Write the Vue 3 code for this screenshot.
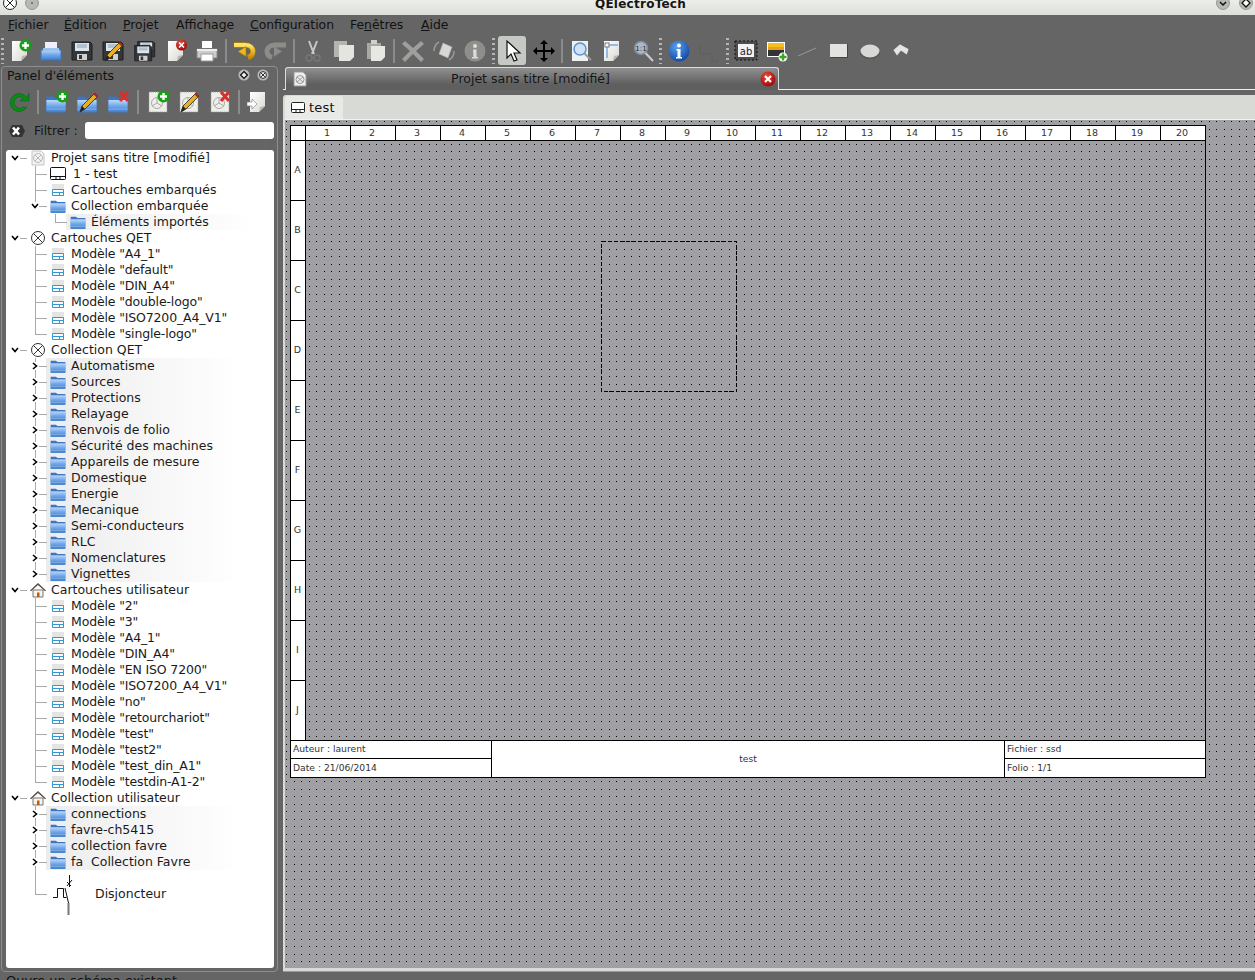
<template>
  <div class="app">
    <!-- shared icon shapes -->
    <svg class="defs" width="0" height="0">
      <defs>
        <linearGradient id="blue" x1="0" y1="0" x2="0" y2="1"><stop offset="0" stop-color="#bcd9f7" /><stop offset=".5" stop-color="#6ea6e8" /><stop offset="1" stop-color="#3f7fcf" /></linearGradient>
        <linearGradient id="paper" x1="0" y1="0" x2="1" y2="1"><stop offset="0" stop-color="#fff" /><stop offset="1" stop-color="#d8d8d2" /></linearGradient>
        <linearGradient id="gold" x1="0" y1="0" x2="0" y2="1"><stop offset="0" stop-color="#ffe46a" /><stop offset="1" stop-color="#c88a00" /></linearGradient>
        <radialGradient id="infob" cx=".4" cy=".3" r=".8"><stop offset="0" stop-color="#5aa0ee" /><stop offset="1" stop-color="#0a3f9c" /></radialGradient>
        <radialGradient id="redb" cx=".4" cy=".3" r=".8"><stop offset="0" stop-color="#e84a3a" /><stop offset="1" stop-color="#900" /></radialGradient>
        <symbol id="page" viewBox="0 0 24 24"><path d="M4 2h15v14l-6 6H4z" fill="url(#paper)" /><path d="M13 22l1-5 5-1z" fill="#b8b8b4" /></symbol>
        <symbol id="plus" viewBox="0 0 24 24"><circle cx="17.500" cy="6.500" r="6" fill="#15a015" /><path d="M17.500 3v7M14 6.500h7" stroke="#fff" stroke-width="2.400" /></symbol>
        <symbol id="redx" viewBox="0 0 24 24"><path d="M13 2l8 9M21 2l-8 9" stroke="#d8302c" stroke-width="3.200" /></symbol>
        <symbol id="pencil" viewBox="0 0 24 24"><path d="M4 22l2-6L19 3l3 3L9 19z" fill="#e8b020" stroke="#222" stroke-width=".8" /><path d="M17.500 4.500l3 3 1.500-1.500-3-3z" fill="#c02020" /><path d="M4 22l2-6 3 3z" fill="#222" /></symbol>
        <symbol id="folder" viewBox="0 0 24 24"><path d="M1 4h8l2 2h12v16H1z" fill="#3a76c4" /><path d="M1 8h22v14H1z" fill="url(#blue)" /><path d="M1 18h22v1H1z" fill="#fff" fill-opacity=".3" /></symbol>
        <symbol id="elem" viewBox="0 0 24 24"><path d="M3 2h15l3 3v17H3z" fill="#efefe9" stroke="#999" stroke-dasharray="1 1" /><circle cx="11" cy="13" r="5.500" fill="none" stroke="#aaa" /><path d="M11 7.500v5.500l5 3M11 13l-5 3" stroke="#aaa" fill="none" /></symbol>
        <symbol id="floppy" viewBox="0 0 24 24"><path d="M2 3h18l2 2v16H2z" fill="#33363a" stroke="#1c1c1c" /><path d="M5 4h14v8H5z" fill="#dce4ec" /><path d="M7 6h10M7 8h10" stroke="#8aa0b8" /><path d="M7 15h10v6H7z" fill="#d0d0d0" /><path d="M9 16h3v4H9z" fill="#333" /></symbol>
      </defs>
    </svg>

    <header class="titlebar">
      <span class="win-btn cross"><svg viewBox="0 0 14 14"><circle cx="7" cy="7" r="6.500" fill="#fff" stroke="#222" /><path d="M2.500 2.500l9 9M11.500 2.500l-9 9" stroke="#222" /></svg></span>
      <span class="win-btn pin"><svg viewBox="0 0 14 14"><circle cx="7" cy="7" r="6.500" fill="#b8b9b4" stroke="#999" /><circle cx="7" cy="7" r="1" fill="#666" /></svg></span>
      <span class="title">QElectroTech</span>
      <span class="win-btn mini"><svg viewBox="0 0 14 14"><circle cx="7" cy="7" r="6.500" fill="#b8b9b4" stroke="#999" /><path d="M4 6l3 3 3-3" fill="none" stroke="#111" stroke-width="1.500" /></svg></span>
      <span class="win-btn maxi"><svg viewBox="0 0 14 14"><circle cx="7" cy="7" r="6.500" fill="#b8b9b4" stroke="#999" /><path d="M7 3l4 4-4 4-4-4z" fill="#fff" stroke="#111" stroke-width="1.300" /></svg></span>
    </header>

    <nav class="menubar">
      <span style="width:56px"><u>F</u>ichier</span>
      <span style="width:59px"><u>É</u>dition</span>
      <span style="width:53px"><u>P</u>rojet</span>
      <span style="width:74px">Afficha<u>g</u>e</span>
      <span style="width:100px"><u>C</u>onfiguration</span>
      <span style="width:71px">Fe<u>n</u>êtres</span>
      <span><u>A</u>ide</span>
    </nav>

    <div class="toolbar">
      <span class="grip first"></span>
      <template v-for="(t, i) in mainTools" :key="i">
        <span v-if="t === '|'" class="sep"></span>
        <span v-else-if="t === ':'" class="grip"></span>
        <span v-else-if="t === ';'" class="grip thin"></span>
        <span v-else class="tool" :class="{ on: t === 'select', last: i > 21 }">
          <svg width="24" height="24" viewBox="0 0 24 24" v-html="icons[t]"></svg>
        </span>
      </template>
    </div>

    <main class="body">
      <aside class="dock">
        <div class="dock-head">
          <span>Panel d'éléments</span>
          <span class="dock-btns">
            <svg width="12" height="12" viewBox="0 0 14 14"><circle cx="7" cy="7" r="6.500" fill="#bbb" /><path d="M7 3l4 4-4 4-4-4z" fill="#eee" stroke="#111" stroke-width="1.500" /></svg>
            <svg width="12" height="12" viewBox="0 0 14 14"><circle cx="7" cy="7" r="6.500" fill="#bbb" /><circle cx="7" cy="7" r="4" fill="#eee" stroke="#111" /><path d="M4.500 4.500l5 5M9.500 4.500l-5 5" stroke="#111" /></svg>
          </span>
        </div>
        <div class="dock-tools">
          <template v-for="(t, i) in dockTools" :key="i">
            <span v-if="t === '|'" class="sep"></span>
            <span v-else class="tool small"><svg width="24" height="24" viewBox="0 0 24 24" v-html="icons[t]"></svg></span>
          </template>
        </div>
        <div class="filter">
          <svg width="18" height="14" viewBox="0 0 18 14"><path d="M4 1h10l3 6-3 6H4L1 7z" fill="#333" /><path d="M5 3.500l6 7M11 3.500l-6 7" stroke="#fff" stroke-width="2.600" /></svg>
          <label>Filtrer :</label>
          <span class="filter-input"></span>
        </div>
        <div class="tree">
          <div v-for="(r, i) in rows" :key="i" class="row" :class="['d' + r.d, 'i-' + r.icon, { last: r.last, shade: r.shade, model: r.model }]">
            <svg v-if="r.arrow" class="arrow" width="8" height="8" viewBox="0 0 8 8">
              <path :d="r.arrow === 'open' ? 'M1 2l3 3.500L7 2' : 'M2 1l3.500 3L2 7'" fill="none" stroke="#000" stroke-width="1.600" />
            </svg>
            <svg v-if="r.icon === 'breaker'" class="breaker" width="24" height="48" viewBox="0 0 24 48">
              <path d="M19.500 5v12M17 16l5-6M17 12l4 4M15 18l3.500 15M3 27.500h4.500v-9h6v9h3" fill="none" stroke="#111" />
              <path d="M18.500 33v12" stroke="#777" stroke-width="2" />
            </svg>
            <svg v-else class="ticon" width="16" height="16" viewBox="0 0 16 16" v-html="treeIcons[r.icon]"></svg>
            <span>{{ r.label }}</span>
          </div>
        </div>
      </aside>

      <section class="workspace">
        <div class="tabstrip">
          <div class="tab">
            <svg width="14" height="16" viewBox="0 0 14 16"><path d="M1 1h9l3 3v11H1z" fill="#eee" stroke="#999" /><circle cx="7" cy="8.500" r="4" fill="none" stroke="#999" /><path d="M4 6l6 5M10 6l-6 5" stroke="#999" /></svg>
            <span class="tab-title">Projet sans titre [modifié]</span>
            <svg width="16" height="16" viewBox="0 0 16 16"><circle cx="8" cy="8" r="7.500" fill="url(#redb)" /><path d="M5 5l6 6M11 5l-6 6" stroke="#fff" stroke-width="2.200" /></svg>
          </div>
        </div>
        <div class="subwin">
          <div class="subtabs">
            <div class="subtab">
              <svg width="16" height="14" viewBox="0 0 16 14"><rect x="1.500" y="1.500" width="13" height="10" rx="1" fill="#fff" stroke="#222" /><path d="M1.500 8.500h13M6 8.500v3M10 8.500v3" stroke="#222" /></svg>
              <span>test</span>
            </div>
          </div>
          <div class="canvas">
            <div class="sheet">
              <div class="ruler">
                <span class="corner"></span>
                <span v-for="n in 20" :key="n" class="col">{{ n }}</span>
              </div>
              <div class="rows">
                <span v-for="l in 'ABCDEFGHIJ'" :key="l" class="rowhead">{{ l }}</span>
              </div>
              <div class="cartouche">
                <div class="cell-stack">
                  <span>Auteur : laurent</span>
                  <span>Date : 21/06/2014</span>
                </div>
                <div class="cart-title">test</div>
                <div class="cell-stack">
                  <span>Fichier : ssd</span>
                  <span>Folio : 1/1</span>
                </div>
              </div>
            </div>
            <svg class="selection" width="137" height="152"><rect x=".5" y=".5" width="135" height="150" fill="none" stroke="#000" stroke-dasharray="4 2" shape-rendering="crispEdges" /></svg>
          </div>
        </div>
      </section>
    </main>

    <footer class="status">Ouvre un schéma existant</footer>
  </div>
</template>

<script setup>
const mainTools = [
  'new', 'open', 'save', 'saveas', 'saveall', 'close', 'print', '|',
  'undo', 'redo', '|',
  'cut', 'copy', 'paste', '|',
  'del', 'rotate', 'infog', ':',
  'select', 'move', '|',
  'fit', 'layout', 'zoom', ';',
  'info', 'wire', ';',
  'text', 'image', 'line', 'rect', 'ellipse', 'back'
]
const dockTools = ['reload', '|', 'fnew', 'fedit', 'fdel', '|', 'enew', 'eedit', 'edel', '|', 'import']

const use = (id, extra = 'width="24" height="24"') => `<use href="#${id}" ${extra}/>`
const lowFolder = use('folder', 'x="0" y="3" width="22" height="21"')
const icons = {
  new: use('page') + use('plus'),
  open: '<path d="M6 3h12v9H6z" fill="#eef"/><path d="M2 11h20v10H2z" fill="url(#blue)" stroke="#3a76c4"/><path d="M4 9h16v3H4z" fill="#9cc3ee"/>',
  save: use('floppy'),
  saveas: use('floppy') + use('pencil'),
  saveall: '<g transform="translate(3 0) scale(.85)">' + use('floppy') + '</g><g transform="translate(0 4) scale(.85)">' + use('floppy') + '</g>',
  close: use('page') + '<circle cx="17.500" cy="6" r="5.500" fill="url(#redb)"/><path d="M15 3.500l5 5M20 3.500l-5 5" stroke="#fff" stroke-width="1.600"/>',
  print: '<path d="M7 2h10v7H7z" fill="#fff"/><path d="M2 10h20v9H2z" fill="#ccc" stroke="#888"/><path d="M6 15h12v7H6z" fill="#fff" stroke="#999"/><path d="M2 10h20v2H2z" fill="#eee"/>',
  undo: '<path d="M2 6h11c5 0 8 3 8 6.500 0 3-2 5-5 6" fill="none" stroke="#b88400" stroke-width="5.400"/><path d="M2 6h11c5 0 8 3 8 6.500 0 3-2 5-5 6" fill="none" stroke="url(#gold)" stroke-width="4.200"/><path d="M6 12.500l8-5v10z" fill="#e8b820" stroke="#a87400" stroke-width=".6"/>',
  redo: '<path d="M22 6H11C6 6 3 9 3 12.500c0 3 2 5 5 6" fill="none" stroke="#8a8d88" stroke-width="5"/><path d="M18 12.500l-8-5v10z" fill="#8a8d88"/>',
  cut: '<path d="M8 2l5 13M16 2l-5 13" stroke="#c8c8c4" stroke-width="2"/><circle cx="8" cy="19" r="3" fill="none" stroke="#777" stroke-width="1.500"/><circle cx="16" cy="19" r="3" fill="none" stroke="#777" stroke-width="1.500"/>',
  copy: '<path d="M2 2h13v16H2z" fill="#b4b5b0"/><path d="M7 6h15v12l-4 4H7z" fill="#e4e5df"/>',
  paste: '<path d="M4 4h14v16H4z" fill="#a8a9a4"/><path d="M8 1h6v4H8z" fill="#d0d0cc"/><path d="M8 7h14v11l-4 4H8z" fill="#e8e8e2"/>',
  del: '<path d="M4 2l8 7 8-7 3 3-8 7 8 8-3 3-8-8-8 8-3-3 8-8-8-7z" fill="#9ea09c"/>',
  rotate: '<path d="M11 4l9 4-4 11-9-4z" fill="#d8d9d4" stroke="#aaa" stroke-width=".6"/><path d="M2 12q0-6 5-9M22 12q0 6-5 9" fill="none" stroke="#9a9a96" stroke-width="1.500"/>',
  infog: '<circle cx="12" cy="12" r="10.500" fill="#8e8f8b"/><circle cx="12" cy="7" r="2" fill="#ddd"/><path d="M10 10.500h3.500V18H15v1.500H9V18h1.500z" fill="#ddd"/>',
  select: '<path d="M7 2v17l4-4 3 7 3-1-3-7h6z" fill="#fff" stroke="#111" stroke-width="1.200"/>',
  move: '<path d="M12 1l4 4h-3v6h6V8l4 4-4 4v-3h-6v6h3l-4 4-4-4h3v-6H5v3l-4-4 4-4v3h6V5H8z" fill="#000"/>',
  fit: '<path d="M3 2h16v20H3z" fill="#eef0f2"/><circle cx="11" cy="10" r="6" fill="#cfe2f6" stroke="#5a93d6" stroke-width="1.500"/><path d="M15 14l7 7" stroke="#999" stroke-width="2"/>',
  layout: use('page') + '<path d="M7 6h11M7 6v13" stroke="#3a86e8"/><rect x="5" y="4" width="4" height="4" fill="#fff" stroke="#777"/>',
  zoom: '<circle cx="10" cy="9" r="6.500" fill="#aab8c8" stroke="#7d8b9c" stroke-width="1.500"/><text x="10" y="12" font-size="7" text-anchor="middle" fill="#222" font-family="DejaVu Sans">1:1</text><path d="M14.500 14l7.500 8" stroke="#ccc" stroke-width="2"/>',
  info: '<circle cx="12" cy="12" r="10.500" fill="url(#infob)"/><circle cx="12" cy="6.500" r="2" fill="#fff"/><path d="M9.500 10h4v8h1.500v1.500H9V18h1.500v-6.500h-1z" fill="#fff"/>',
  wire: '<path d="M2 6v9h12v7h7" fill="none" stroke="#5e605c"/>',
  text: '<rect x="1" y="2" width="22" height="19" fill="#222" fill-opacity=".35" stroke="#111" stroke-dasharray="2 2"/><rect x="4" y="5" width="16" height="13" fill="#f2f2f6"/><text x="12" y="15.500" font-size="10" text-anchor="middle" fill="#223" font-family="DejaVu Sans">ab</text>',
  image: '<rect x="2" y="3" width="18" height="15" fill="#fff"/><rect x="3" y="4" width="16" height="13" fill="#e8a020"/><rect x="3" y="4" width="16" height="4" fill="#f4c020"/><path d="M3 11h16v6H3z" fill="#333"/><circle cx="18" cy="18" r="4.500" fill="#fff"/><path d="M18 14.500v7M14.500 18h7" stroke="#3aa820" stroke-width="2.400"/>',
  line: '<path d="M2 17l18-8" stroke="#999"/>',
  rect: '<rect x="3" y="5" width="18" height="14" fill="#444"/><rect x="3" y="5" width="17" height="13" fill="#e2e3e0"/>',
  ellipse: '<ellipse cx="12" cy="13" rx="10" ry="7" fill="#555"/><ellipse cx="12" cy="12" rx="9.500" ry="6.500" fill="#d8d8d6"/>',
  back: '<path d="M4 11l7-6 9 5-2 6-6-4-4 5z" fill="#e4e4e2" stroke="#555" stroke-width=".6"/>',
  reload: '<path d="M20 8a9 9 0 1 0 0 9h-4a5.500 5.500 0 1 1 0-9l-3 3h9V3z" fill="#0f8a0f" stroke="#063" stroke-width=".6"/>',
  fnew: lowFolder + use('plus'),
  fedit: lowFolder + use('pencil'),
  fdel: lowFolder + use('redx'),
  enew: use('elem') + use('plus'),
  eedit: use('elem') + use('pencil'),
  edel: use('elem') + use('redx'),
  import: use('page') + '<path d="M1 12h5V9l5 5-5 5v-3H1z" fill="#fff" stroke="#777" stroke-width=".6"/>'
}

const treeIcons = {
  project: '<path d="M2 1h9l3 3v11H2z" fill="#f2f2f2" stroke="#c4c4c4"/><circle cx="8" cy="8" r="4.500" fill="none" stroke="#bbb"/><path d="M5 5l6 6M11 5l-6 6" stroke="#bbb"/>',
  diagram: '<rect x=".5" y="1.500" width="15" height="12" rx="1" fill="#fff" stroke="#111"/><path d="M1 10.500h14M6 10.500v3M10 10.500v3" stroke="#111"/>',
  block: '<path d="M2 2h12v12H2z" fill="#e4e4e4"/><path d="M2.500 7.500h11v6h-11zM2.500 10.500h11M9.500 10.500v3" fill="#fff" stroke="#2f9ad0"/>',
  folder: '<use href="#folder" width="16" height="16"/>',
  qet: '<circle cx="8" cy="8" r="6.500" fill="#fff" stroke="#333"/><path d="M3.500 3.500l9 9M12.500 3.500l-9 9" stroke="#333"/>',
  home: '<path d="M3 8h10v7H3z" fill="#f4f4f0" stroke="#777"/><path d="M0 8.500L8 1l8 7.500-1 .8L8 3 1 9.300z" fill="#5a4a3a"/><path d="M7 10.500h2.500V15H7z" fill="#c85a00"/>'
}

const blocks = list => list.map((n, i) => ({
  d: 1, icon: 'block', model: true, label: `Modèle "${n}"`, last: i === list.length - 1
}))
const folders = (list, lastOne) => list.map((label, i) => ({
  d: 1, icon: 'folder', label, arrow: 'closed', shade: true, last: lastOne && i === list.length - 1
}))
const top = (icon, label) => ({ d: 0, icon, label, arrow: 'open' })

const rows = [
  top('project', 'Projet sans titre [modifié]'),
  { d: 1, icon: 'diagram', label: '1 - test' },
  { d: 1, icon: 'block', label: 'Cartouches embarqués' },
  { d: 1, icon: 'folder', label: 'Collection embarquée', arrow: 'open', last: true },
  { d: 2, icon: 'folder', label: 'Éléments importés', shade: true, last: true },
  top('qet', 'Cartouches QET'),
  ...blocks(['A4_1', 'default', 'DIN_A4', 'double-logo', 'ISO7200_A4_V1', 'single-logo']),
  top('qet', 'Collection QET'),
  ...folders(['Automatisme', 'Sources', 'Protections', 'Relayage', 'Renvois de folio', 'Sécurité des machines', 'Appareils de mesure', 'Domestique', 'Energie', 'Mecanique', 'Semi-conducteurs', 'RLC', 'Nomenclatures', 'Vignettes'], true),
  top('home', 'Cartouches utilisateur'),
  ...blocks(['2', '3', 'A4_1', 'DIN_A4', 'EN ISO 7200', 'ISO7200_A4_V1', 'no', 'retourchariot', 'test', 'test2', 'test_din_A1', 'testdin-A1-2']),
  top('home', 'Collection utilisateur'),
  ...folders(['connections', 'favre-ch5415', 'collection favre', 'fa  Collection Favre'], false),
  { d: 1, icon: 'breaker', label: 'Disjoncteur', last: true }
]
</script>

<style>
html, body { margin: 0; background: #656565; overflow: hidden; }
</style>

<style scoped>
.app {
  width: 1255px;
  height: 980px;
  overflow: hidden;
  display: grid;
  grid-template-rows: 15px 20px 31px 906px 8px;
  background: #656565;
  color: #151515;
  font-family: "DejaVu Sans", sans-serif;
  font-size: 12.500px;
  position: relative;
}
.defs { position: absolute; }

.titlebar {
  display: flex;
  align-items: flex-start;
  background: linear-gradient(#eceee9, #dcded8);
  overflow: hidden;
  position: relative;
}
.title {
  position: absolute;
  left: 26px;
  right: 0;
  top: -3px;
  text-align: center;
  font-weight: bold;
  font-size: 12px;
  letter-spacing: .25px;
  line-height: 14px;
}
.win-btn { position: absolute; top: -4px; width: 14px; height: 14px; }
.win-btn svg { display: block; }
.cross { left: 3px; }
.pin { left: 25px; }
.mini { left: 1216px; }
.maxi { left: 1239px; }

.menubar {
  display: flex;
  align-items: center;
  padding: 0 0 2px 8px;
  box-sizing: border-box;
  font-size: 12.400px;
  color: #111;
}
.menubar span { flex: none; }

.toolbar {
  display: flex;
  align-items: center;
  padding-left: 4px;
}
.tool {
  flex: none;
  width: 31.250px;
  height: 29px;
  display: flex;
  align-items: center;
  justify-content: center;
}
.tool.last { width: 31px; }
.tool.small { width: 31px; }
.tool.on { background: #c6c9c3; border-radius: 3px; width: 28px; margin: 0 1.630px; }
.sep {
  flex: none;
  width: 2px;
  height: 24px;
  margin: 0 2px;
  background: #8b8b8b;
}
.grip {
  flex: none;
  width: 3px;
  height: 26px;
  margin: 0 1.500px;
  background: repeating-linear-gradient(#b5b5b5 0 2px, transparent 2px 5px);
}
.grip.thin { margin: 0 1px; }
.grip.first { position: absolute; left: 1px; margin: 0; }

.body { display: flex; min-height: 0; }

.dock {
  flex: none;
  width: 277px;
  margin: 0 5px 0 1px;
  box-sizing: border-box;
  border: 1px solid #8e8e8e;
  border-radius: 4px;
  display: flex;
  flex-direction: column;
  padding: 0 3px 3px 4px;
}
.dock-head {
  height: 16px;
  padding: 0 1px;
  display: flex;
  align-items: flex-end;
  justify-content: space-between;
  color: #111;
}
.dock-btns { display: flex; gap: 7px; padding: 0 4px 2px 0; }
.dock-tools {
  height: 34px;
  margin: 2px 0 0 -3px;
  display: flex;
  align-items: center;
}
.dock-tools .sep { margin: 0 2.750px; }
.filter {
  height: 17px;
  margin-top: 3px;
  display: flex;
  align-items: center;
}
.filter svg { margin-left: 2px; }
.filter label { margin-left: 8px; width: 51px; flex: none; font-size: 12.400px; }
.filter-input {
  flex: 1;
  height: 17px;
  background: #fff;
  border-radius: 3px;
}

.tree {
  flex: 1;
  margin-top: 11px;
  background: #fff;
  border-radius: 3px;
  overflow: hidden;
}
.row {
  position: relative;
  height: 16px;
  display: flex;
  align-items: center;
  background-repeat: no-repeat;
  white-space: pre;
  color: #1a1a1a;
}
.row span { line-height: 16px; }
.row.model { letter-spacing: -.15px; }
.row.i-breaker { height: 48px; }
.d0 { padding-left: 24px; }
.d1 { padding-left: 44px; }
.d2 { padding-left: 64px; }
.ticon { flex: none; margin-right: 5px; position: relative; }
.i-diagram .ticon { margin-right: 7px; }

/* tree branch lines */
.row::before, .row::after { content: ""; position: absolute; background: #a9a9a9; }
.row::after { height: 1px; top: 50%; }
.d0::before { display: none; }
.d0::after { left: 14px; width: 7px; }
.d1::before, .d2::before { width: 1px; top: 0; bottom: 0; }
.d1::before { left: 29px; }
.d2::before { left: 49px; }
.d1::after { left: 29px; width: 12px; }
.d2::after { left: 49px; width: 12px; }
.row.last::before { bottom: 50%; }

.shade.d1 { background-image: linear-gradient(90deg, #ececec, #fff); background-size: 195px 100%; background-position: 40px 0; }
.shade.d2 { background-image: linear-gradient(90deg, #eeeeee, #fff); background-size: 190px 100%; background-position: 60px 0; }

.arrow { position: absolute; z-index: 1; top: 4px; background: #fff; }
.d0 .arrow { left: 5px; }
.d1 .arrow { left: 25px; }
.breaker { flex: none; margin-right: 21px; }

.workspace { flex: 1; min-width: 0; display: flex; flex-direction: column; }
.tabstrip {
  height: 24px;
  flex: none;
  box-sizing: border-box;
  border-bottom: 1px solid #eee;
  margin-bottom: 5px;
  display: flex;
  align-items: flex-end;
  padding-left: 2px;
}
.tab {
  width: 494px;
  height: 23px;
  margin-bottom: -1px;
  box-sizing: border-box;
  border: 1px solid #dcdcdc;
  border-bottom: none;
  border-radius: 3px 3px 0 0;
  background: linear-gradient(#8f8f8f, #5f5f5f 75%);
  display: flex;
  align-items: center;
  padding: 0 2px 1px 7px;
}
.tab-title { flex: 1; text-align: center; padding-right: 6px; }
.subwin {
  flex: 1;
  min-height: 0;
  background: #d8dbd5;
  border-radius: 3px 0 0 0;
  border-bottom: 1px solid #9a9a9a;
  padding: 0 0 3px 2px;
  display: flex;
  flex-direction: column;
}
.subtabs { height: 25px; flex: none; box-sizing: border-box; padding-top: 1px; border-bottom: 1px solid #f2f2f2; }
.subtab {
  width: 58px;
  height: 23px;
  background: #e8eae5;
  border-radius: 3px 3px 0 0;
  display: flex;
  align-items: center;
  gap: 3px;
  padding-left: 5px;
  box-sizing: border-box;
  font-size: 13px;
  letter-spacing: .2px;
}

.canvas {
  flex: 1;
  min-height: 0;
  position: relative;
  overflow: hidden;
  background-color: #a09fa4;
  background-image:
    conic-gradient(from 270deg at 1px 1px, #000 25%, transparent 0),
    conic-gradient(from 270deg at 1px 1px, #000 25%, transparent 0),
    conic-gradient(from 270deg at 1px 1px, #000 25%, transparent 0),
    conic-gradient(from 270deg at 1px 1px, #000 25%, transparent 0);
  background-size: 15px 15px;
  background-position: 1px 1px, 9px 1px, 1px 9px, 9px 9px;
}
.sheet {
  width: 916px;
  margin: 5px 0 0 5px;
  box-sizing: border-box;
  border-left: 1px solid #000;
  border-top: 1px solid #000;
  font-size: 9.500px;
  color: #333;
}
.ruler { display: flex; height: 15px; background: #fff; border-bottom: 1px solid #000; box-sizing: border-box; }
.corner { width: 15px; flex: none; box-sizing: border-box; border-right: 1px solid #000; }
.col {
  width: 45px;
  flex: none;
  box-sizing: border-box;
  border-right: 1px solid #000;
  padding-right: 2px;
  text-align: center;
  line-height: 14px;
}
.rows {
  display: flex;
  flex-direction: column;
  border-right: 1px solid #000;
  box-sizing: border-box;
}
.rowhead {
  width: 15px;
  height: 60px;
  box-sizing: border-box;
  background: #fff;
  border-right: 1px solid #000;
  border-bottom: 1px solid #000;
  padding: 0 1px 2px 0;
  display: flex;
  align-items: center;
  justify-content: center;
}
.cartouche {
  display: grid;
  grid-template-columns: 201px 513px 201px;
  height: 38px;
  background: #fff;
  border-top: 1px solid #000;
  border-right: 1px solid #000;
  border-bottom: 1px solid #000;
  box-sizing: border-box;
  margin-top: -1px;
  font-size: 9.200px;
}
.cartouche > div { border-right: 1px solid #000; box-sizing: border-box; min-width: 0; }
.cartouche > div:last-child { border-right: none; }
.cell-stack { display: grid; grid-template-rows: 18px 18px; }
.cell-stack span { padding-left: 2px; line-height: 16px; }
.cell-stack span:last-child { line-height: 18px; }
.cell-stack span:first-child { border-bottom: 1px solid #000; }
.cart-title { display: flex; align-items: center; justify-content: center; padding-bottom: 2px; }
.selection { position: absolute; left: 316px; top: 121px; }

.status { font-size: 13px; line-height: 12px; padding: 3px 0 0 6px; color: #111; white-space: nowrap; }
</style>
